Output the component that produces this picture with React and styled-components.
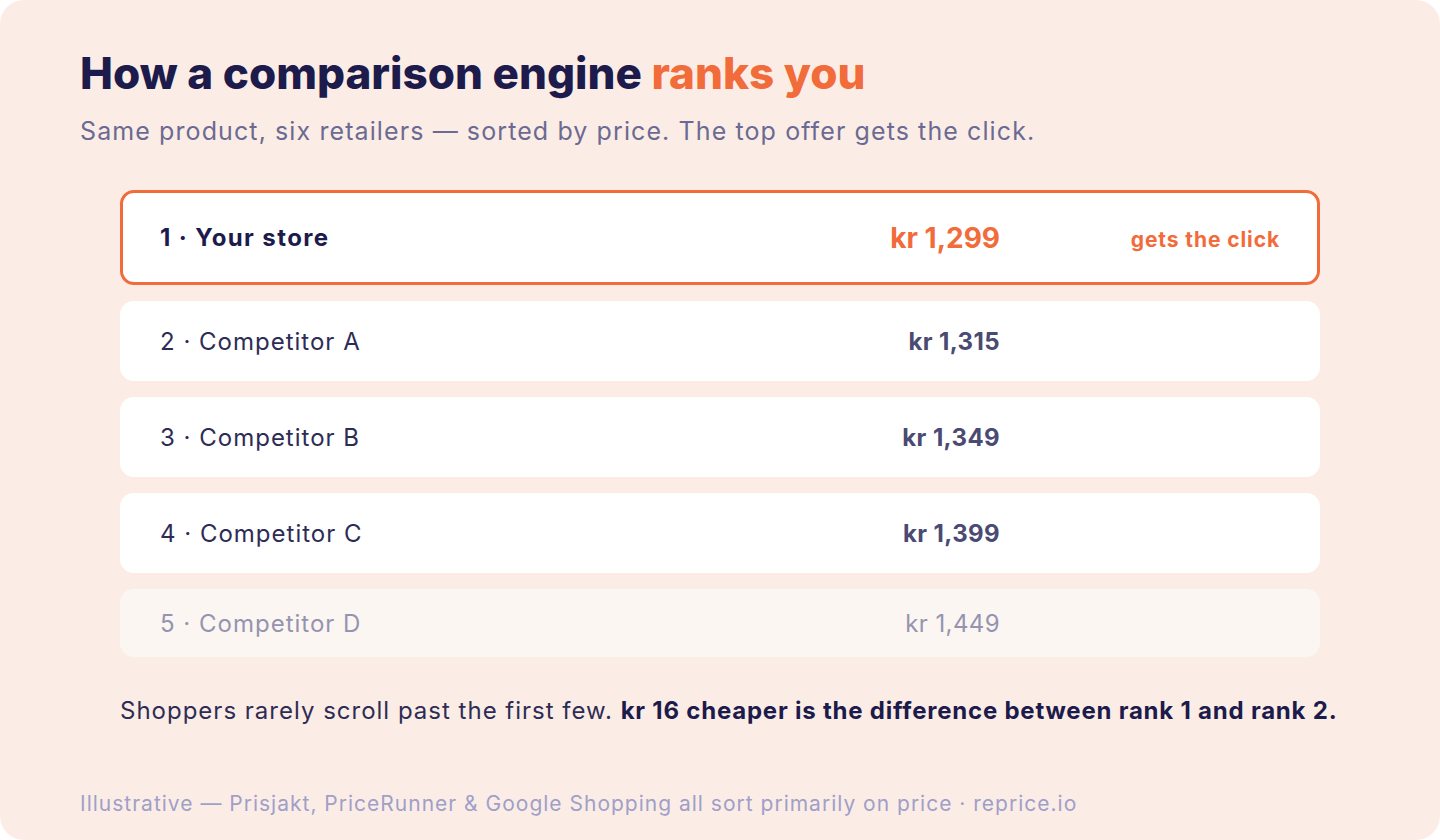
import styled, { createGlobalStyle } from "styled-components";

const GlobalStyle = createGlobalStyle`
  html, body {
    margin: 0;
    padding: 0;
    background: #ffffff;
  }
  body {
    font-family: Inter, "Noto Sans", sans-serif;
  }
`;

const Card = styled.div`
  width: 1440px;
  height: 840px;
  box-sizing: border-box;
  background: #fbede6;
  border-radius: 24px;
  padding: 46px 80px 0;
  display: flex;
  flex-direction: column;
`;

const Title = styled.h1`
  margin: 0;
  font-size: 44px;
  line-height: 54px;
  font-weight: 800;
  color: #1c1b4b;
`;

const Accent = styled.span`
  color: #f26b3a;
`;

const Subtitle = styled.p`
  margin: 15px 0 0;
  font-size: 25px;
  line-height: 32px;
  letter-spacing: 1.1px;
  color: #6b6a92;
`;

const List = styled.div`
  margin: 43px 40px 0;
  display: flex;
  flex-direction: column;
  gap: 16px;
`;

const Row = styled.div`
  display: grid;
  grid-template-columns: 1fr 240px 280px;
  align-items: center;
  box-sizing: border-box;
  height: ${(p) => (p.$top ? "95px" : p.$faded ? "68px" : "80px")};
  padding: 0 ${(p) => (p.$top ? "37px" : "40px")};
  border-radius: 14px;
  background: ${(p) => (p.$faded ? "#fcf6f2" : "#ffffff")};
  border: ${(p) => (p.$top ? "3px solid #f26b3a" : "none")};
`;

const Label = styled.div`
  font-size: 24px;
  font-weight: ${(p) => (p.$top ? 700 : 400)};
  letter-spacing: ${(p) => (p.$top ? "1.4px" : "1px")};
  color: ${(p) => (p.$top ? "#1c1b4b" : p.$faded ? "#9594b0" : "#2d2c55")};
`;

const Price = styled.div`
  text-align: right;
  font-size: ${(p) => (p.$top ? "28px" : "24px")};
  font-weight: ${(p) => (p.$faded ? 400 : 700)};
  letter-spacing: ${(p) => (p.$top ? "0" : "0.4px")};
  color: ${(p) => (p.$top ? "#f26b3a" : p.$faded ? "#9594b0" : "#4a4a72")};
`;

const Tag = styled.div`
  text-align: right;
  font-size: 21px;
  font-weight: 700;
  letter-spacing: 0.9px;
  color: #f26b3a;
  padding-top: 4px;
`;

const Note = styled.p`
  margin: 38px 0 0 40px;
  font-size: 24px;
  line-height: 32px;
  letter-spacing: 1px;
  white-space: nowrap;
  color: #2d2c55;

  strong {
    color: #1c1b4b;
    font-weight: 700;
    letter-spacing: 0.78px;
  }
`;

const Footer = styled.p`
  margin: auto 0 22px;
  font-size: 21px;
  line-height: 28px;
  letter-spacing: 1px;
  color: #a09fc8;
`;

const rows = [
  { label: "1 · Your store", price: "kr 1,299", tag: "gets the click", top: true },
  { label: "2 · Competitor A", price: "kr 1,315" },
  { label: "3 · Competitor B", price: "kr 1,349" },
  { label: "4 · Competitor C", price: "kr 1,399" },
  { label: "5 · Competitor D", price: "kr 1,449", faded: true },
];

export default function App() {
  return (
    <>
      <GlobalStyle />
      <Card>
        <Title>
          How a comparison engine <Accent>ranks you</Accent>
        </Title>
        <Subtitle>
          Same product, six retailers — sorted by price. The top offer gets the click.
        </Subtitle>
        <List>
          {rows.map((r) => (
            <Row key={r.label} $top={r.top} $faded={r.faded}>
              <Label $top={r.top} $faded={r.faded}>{r.label}</Label>
              <Price $top={r.top} $faded={r.faded}>{r.price}</Price>
              <Tag>{r.tag}</Tag>
            </Row>
          ))}
        </List>
        <Note>
          Shoppers rarely scroll past the first few.{" "}
          <strong>kr 16 cheaper is the difference between rank 1 and rank 2.</strong>
        </Note>
        <Footer>
          Illustrative — Prisjakt, PriceRunner &amp; Google Shopping all sort primarily on price · reprice.io
        </Footer>
      </Card>
    </>
  );
}
